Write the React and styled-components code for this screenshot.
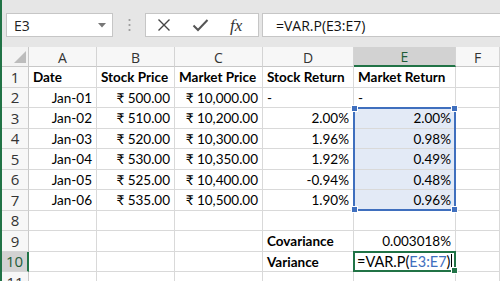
import React from 'react';
import styled, { createGlobalStyle } from 'styled-components';

const Global = createGlobalStyle`
  html, body { margin: 0; padding: 0; background: #fff; }
  body { width: 500px; height: 281px; overflow: hidden; }
  #root { width: 500px; height: 281px; }
`;

const Window = styled.div`
  width: 500px;
  height: 281px;
  overflow: hidden;
  display: flex;
  flex-direction: column;
  border-left: 2px solid #217346;
  box-sizing: border-box;
  background: #fff;
`;

const Toolbar = styled.div`
  height: 47px;
  flex: none;
  background: #e6e6e6;
  display: flex;
  align-items: flex-start;
  padding: 13px 0 0 4px;
  box-sizing: border-box;
`;

const NameBox = styled.div`
  width: 107px;
  height: 24px;
  box-sizing: border-box;
  background: #fff;
  border: 1px solid #c6c6c6;
  display: flex;
  align-items: center;
  justify-content: space-between;
  padding: 0 6px 0 7px;
  font-family: "Open Sans", sans-serif;
  font-size: 14px;
  color: #222;
`;

const Dots = styled.div`
  width: 32px;
  height: 24px;
  display: flex;
  align-items: center;
  justify-content: center;
`;

const IconBox = styled.div`
  width: 114px;
  height: 24px;
  box-sizing: border-box;
  background: #fff;
  border: 1px solid #c6c6c6;
  display: flex;
  align-items: center;
  padding-left: 11px;
  gap: 21px;
`;

const Fx = styled.span`
  font-family: "Liberation Serif", serif;
  font-style: italic;
  font-size: 17px;
  color: #333;
  line-height: 1;
`;

const FormulaInput = styled.div`
  flex: 1;
  margin-left: 3px;
  height: 24px;
  box-sizing: border-box;
  background: #fff;
  border: 1px solid #c6c6c6;
  border-right: none;
  display: flex;
  align-items: center;
  padding-left: 13px;
  font-family: "Open Sans", sans-serif;
  font-size: 14px;
  color: #111;
`;

const Grid = styled.div`
  flex: 1;
  display: grid;
  grid-template-columns: 27px 68px 78px 88px 91px 102px 1fr;
  grid-template-rows: 20px repeat(11, 20.5px);
  font-family: "Lato", sans-serif;
  font-size: 13.5px;
  color: #000;
`;

const Corner = styled.div`
  grid-column: 1;
  grid-row: 1;
  background: #f3f3f3;
  border-right: 1px solid #c8c8c8;
  border-bottom: 1px solid #c8c8c8;
  box-sizing: border-box;
  display: flex;
  align-items: flex-end;
  justify-content: flex-end;
  padding: 0 2px 3px 0;
`;

const ColHead = styled.div`
  grid-column: ${p => p.$col};
  grid-row: 1;
  box-sizing: border-box;
  background: ${p => (p.$active ? '#d2d2d2' : '#f7f7f7')};
  border-right: 1px solid #d4d4d4;
  border-bottom: ${p => (p.$active ? '2px solid #217346' : '1px solid #c8c8c8')};
  display: flex;
  align-items: center;
  justify-content: center;
  font-family: "Open Sans", sans-serif;
  font-size: 14px;
  color: ${p => (p.$active ? '#1f5c38' : '#333')};
  padding-top: 1px;
`;

const RowHead = styled.div`
  grid-column: 1;
  grid-row: ${p => p.$row};
  box-sizing: border-box;
  background: ${p => (p.$active ? '#d2d2d2' : '#f7f7f7')};
  border-right: ${p => (p.$active ? '2px solid #217346' : '1px solid #c8c8c8')};
  border-bottom: 1px solid #d4d4d4;
  display: flex;
  align-items: center;
  justify-content: center;
  font-family: "Open Sans", sans-serif;
  font-size: 15px;
  color: ${p => (p.$active ? '#1f5c38' : '#333')};
`;

const Cell = styled.div`
  grid-column: ${p => p.$col};
  grid-row: ${p => p.$row};
  box-sizing: border-box;
  border-right: 1px solid #d9d9d9;
  border-bottom: 1px solid #d9d9d9;
  background: ${p => (p.$range ? '#e3eaf6' : '#fff')};
  display: flex;
  align-items: center;
  justify-content: ${p => (p.$align === 'right' ? 'flex-end' : 'flex-start')};
  padding: 1px 4px 0 4px;
  font-weight: ${p => (p.$bold ? 700 : 400)};
  white-space: nowrap;
  overflow: visible;
`;

const RangeBox = styled.div`
  grid-column: 6;
  grid-row: 4 / 9;
  margin: -1px 0 0 -1px;
  border: 2px solid #3f6fbe;
  position: relative;
  pointer-events: none;
`;

const Handle = styled.span`
  position: absolute;
  width: 5px;
  height: 5px;
  background: #3f6fbe;
  border: 1px solid #fff;
  ${p => (p.$top ? 'top: -4px;' : 'bottom: -4px;')}
  ${p => (p.$left ? 'left: -4px;' : 'right: -4px;')}
`;

const ActiveBox = styled.div`
  grid-column: 6;
  grid-row: 11;
  margin: -1px 0 0 -1px;
  border: 2px solid #217346;
  position: relative;
  display: flex;
  align-items: center;
  padding: 1px 0 0 2px;
  font-family: "Lato", sans-serif;
  font-size: 14.5px;
  white-space: nowrap;
`;

const FillHandle = styled.span`
  position: absolute;
  right: -4px;
  bottom: -4px;
  width: 5px;
  height: 5px;
  background: #217346;
  border: 1px solid #fff;
`;

const Ref = styled.span`
  color: #3f6fbe;
`;

const Caret = styled.span`
  display: inline-block;
  width: 1px;
  height: 16px;
  background: #000;
  margin-left: 1px;
`;

const cols = ['A', 'B', 'C', 'D', 'E', 'F'];

const data = [
  [['Date', 'left', true], ['Stock Price', 'left', true], ['Market Price', 'left', true], ['Stock Return', 'left', true], ['Market Return', 'left', true]],
  [['Jan-01', 'right'], ['₹ 500.00', 'right'], ['₹ 10,000.00', 'right'], ['-', 'left'], ['-', 'left']],
  [['Jan-02', 'right'], ['₹ 510.00', 'right'], ['₹ 10,200.00', 'right'], ['2.00%', 'right'], ['2.00%', 'right']],
  [['Jan-03', 'right'], ['₹ 520.00', 'right'], ['₹ 10,300.00', 'right'], ['1.96%', 'right'], ['0.98%', 'right']],
  [['Jan-04', 'right'], ['₹ 530.00', 'right'], ['₹ 10,350.00', 'right'], ['1.92%', 'right'], ['0.49%', 'right']],
  [['Jan-05', 'right'], ['₹ 525.00', 'right'], ['₹ 10,400.00', 'right'], ['-0.94%', 'right'], ['0.48%', 'right']],
  [['Jan-06', 'right'], ['₹ 535.00', 'right'], ['₹ 10,500.00', 'right'], ['1.90%', 'right'], ['0.96%', 'right']],
  [],
  [null, null, null, ['Covariance', 'left', true], ['0.003018%', 'right']],
  [null, null, null, ['Variance', 'left', true], null],
  [],
];

export default function App() {
  const cells = [];
  for (let r = 0; r < 11; r++) {
    const row = data[r] || [];
    for (let c = 0; c < 6; c++) {
      const v = row[c];
      const inRange = c === 4 && r >= 2 && r <= 6;
      cells.push(
        <Cell
          key={`${r}-${c}`}
          $row={r + 2}
          $col={c + 2}
          $align={v ? v[1] : 'left'}
          $bold={v ? v[2] : false}
          $range={inRange}
        >
          {v ? v[0] : ''}
        </Cell>
      );
    }
  }
  return (
    <Window>
      <Global />
      <Toolbar>
        <NameBox>
          <span>E3</span>
          <svg width="8" height="5" viewBox="0 0 8 5">
            <path d="M0 0 L8 0 L4 4.5 Z" fill="#777" />
          </svg>
        </NameBox>
        <Dots>
          <svg width="3" height="14" viewBox="0 0 3 14">
            <circle cx="1.5" cy="2" r="1.1" fill="#999" />
            <circle cx="1.5" cy="7" r="1.1" fill="#999" />
            <circle cx="1.5" cy="12" r="1.1" fill="#999" />
          </svg>
        </Dots>
        <IconBox>
          <svg width="14" height="14" viewBox="0 0 14 14">
            <path d="M1.5 1.5 L12.5 12.5 M12.5 1.5 L1.5 12.5" stroke="#444" strokeWidth="1.4" />
          </svg>
          <svg width="17" height="14" viewBox="0 0 17 14">
            <path d="M1.5 7.5 L6 12 L15.5 2" stroke="#555" strokeWidth="2" fill="none" />
          </svg>
          <Fx>fx</Fx>
        </IconBox>
        <FormulaInput>=VAR.P(E3:E7)</FormulaInput>
      </Toolbar>
      <Grid>
        <Corner>
          <svg width="12" height="12" viewBox="0 0 12 12">
            <path d="M12 0 L12 12 L0 12 Z" fill="#bcbcbc" />
          </svg>
        </Corner>
        {cols.map((l, i) => (
          <ColHead key={l} $col={i + 2} $active={l === 'E'}>{l}</ColHead>
        ))}
        {Array.from({ length: 11 }, (_, i) => (
          <RowHead key={i} $row={i + 2} $active={i + 1 === 10}>{i + 1}</RowHead>
        ))}
        {cells}
        <RangeBox>
          <Handle $top $left />
          <Handle $top />
          <Handle $left />
          <Handle />
        </RangeBox>
        <ActiveBox>
          =VAR.P(<Ref>E3:E7</Ref>)<Caret />
          <FillHandle />
        </ActiveBox>
      </Grid>
    </Window>
  );
}
